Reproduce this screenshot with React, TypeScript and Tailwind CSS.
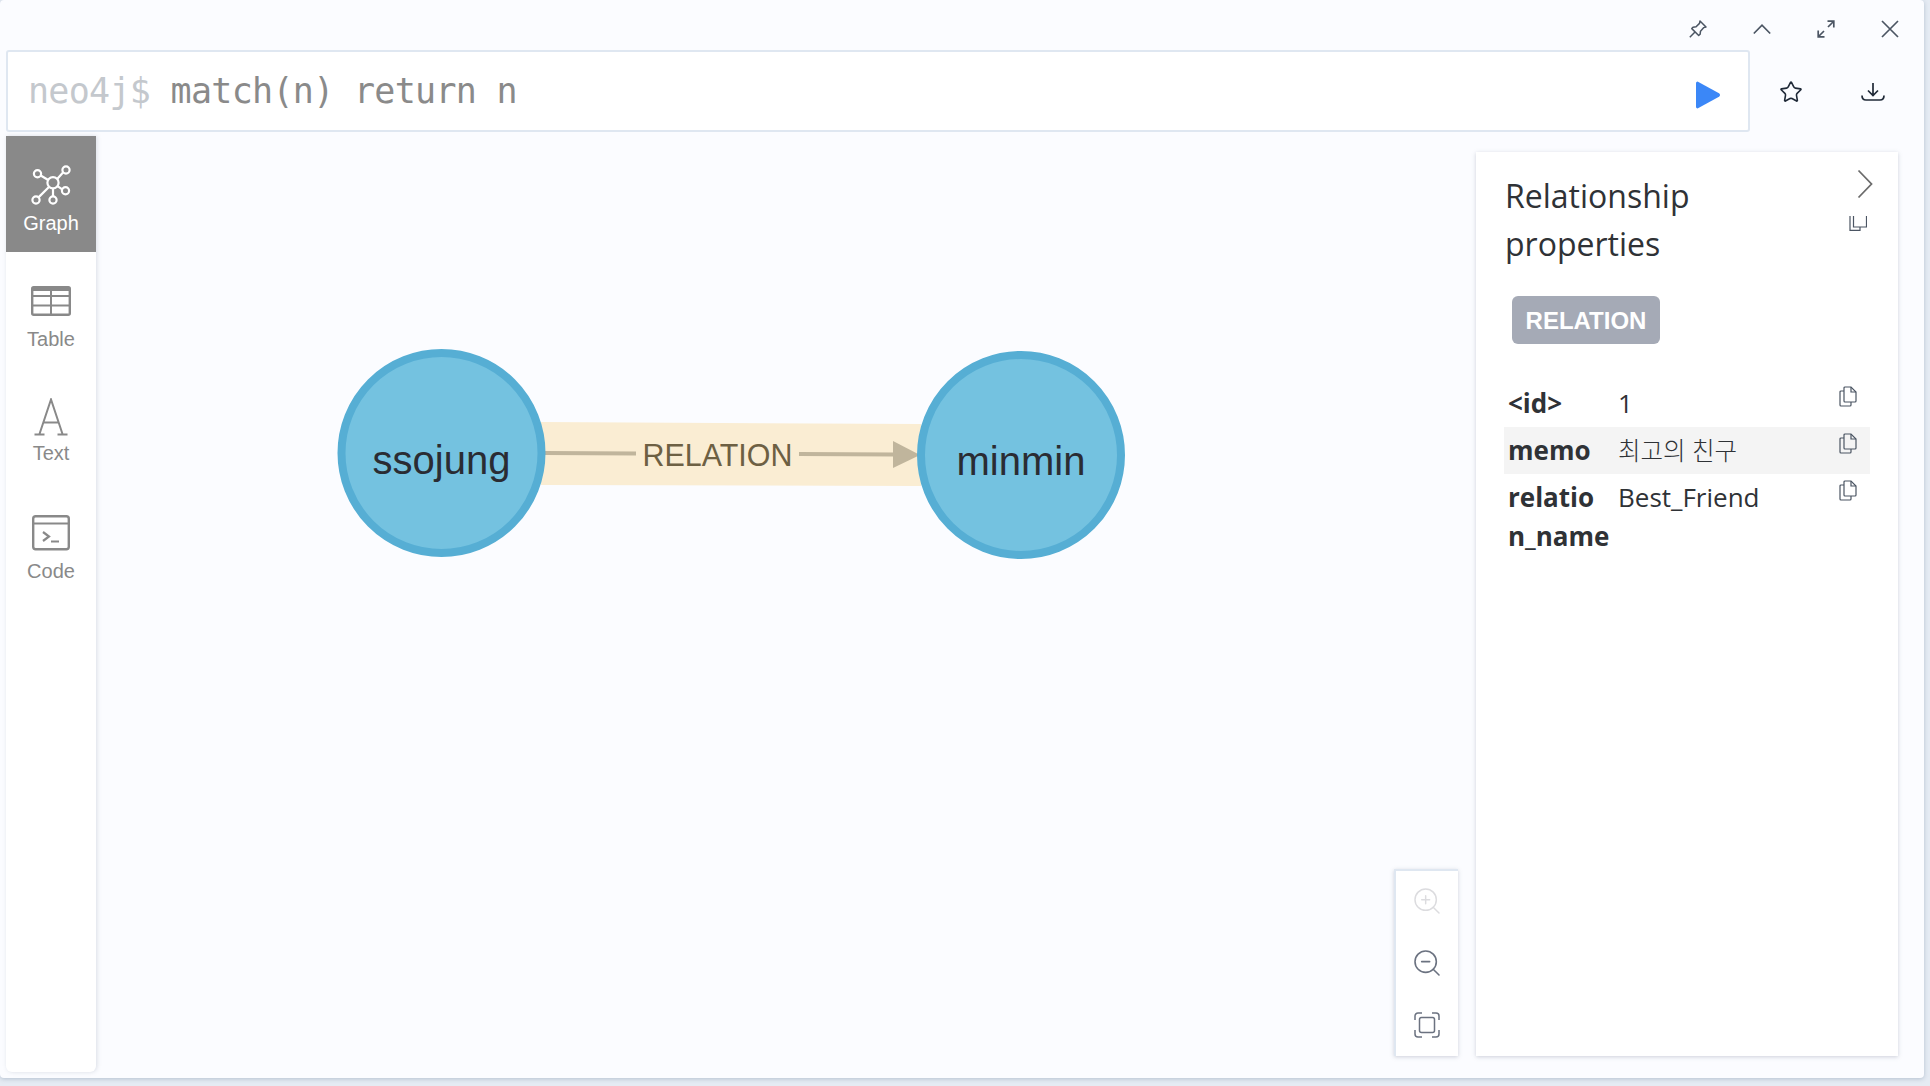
import { ZoomIn, ZoomOut, Star } from 'lucide-react';

const openSans = "font-['Open_Sans','Noto_Sans_CJK_KR',sans-serif]";
const helvetica = "font-['Liberation_Sans',sans-serif]";

function GraphIcon() {
  return (
    <svg width="40" height="40" viewBox="0 0 40 40" fill="none" stroke="currentColor" strokeWidth="2.2">
      <circle cx="22" cy="17.7" r="5.6" />
      <circle cx="6.5" cy="8.7" r="3.6" />
      <circle cx="35" cy="5" r="3.6" />
      <circle cx="34.5" cy="25.7" r="3.6" />
      <circle cx="5" cy="35" r="3.6" />
      <circle cx="22" cy="35" r="3.6" />
      <path d="M9.7 10.5 17.2 15M32 7.5l-5.8 6.4M31.2 24.3l-5-3.5M7.5 32.4l10.7-10.7M22 23.3v8.1" />
    </svg>
  );
}

function TableIcon() {
  return (
    <svg width="40" height="30" viewBox="0 0 40 30" fill="none" stroke="currentColor">
      <rect x="1.2" y="1.2" width="37.6" height="27.6" rx="1.5" strokeWidth="2.4" />
      <path d="M1 10h38M1 19.5h38M20 1v28" strokeWidth="2" />
      <path d="M1 3.5h38" strokeWidth="3" />
    </svg>
  );
}

function TextIcon() {
  return (
    <svg width="34" height="38" viewBox="0 0 34 38" fill="none" stroke="currentColor" strokeWidth="2" className="mt-[3px]">
      <path d="M5.5 36 17 1.5 28.5 36M9.5 24.5h15M0.5 36.5h10M23.5 36.5h10" />
    </svg>
  );
}

function CodeIcon() {
  return (
    <svg width="38" height="36" viewBox="0 0 38 36" fill="none" stroke="currentColor">
      <rect x="1.2" y="1.2" width="35.6" height="33" rx="2.5" strokeWidth="2.4" />
      <path d="M1 8.5h36" strokeWidth="2.2" />
      <path d="M11 17l6 4.5-6 4.5M19 26.5h8" strokeWidth="2.2" />
    </svg>
  );
}

function CopyIcon({ className }: { className?: string }) {
  return (
    <svg width="18" height="21" viewBox="0 0 18 21" fill="none" stroke="#4b5563" strokeWidth="1.2" className={className}>
      <path d="M6 1h6l5 5v9a1 1 0 0 1-1 1H6a1 1 0 0 1-1-1V2a1 1 0 0 1 1-1Z" />
      <path d="M12 1v5h5M5 5H2a1 1 0 0 0-1 1v13a1 1 0 0 0 1 1h9a1 1 0 0 0 1-1v-3" />
    </svg>
  );
}

const tabs = [
  { label: 'Graph', icon: <GraphIcon />, height: 'h-[116px]', active: true },
  { label: 'Table', icon: <TableIcon />, height: 'h-[114px]', active: false },
  { label: 'Text', icon: <TextIcon />, height: 'h-[118px]', active: false },
  { label: 'Code', icon: <CodeIcon />, height: 'h-[116px]', active: false },
];

const props = [
  { name: '<id>', value: '1', rowClass: 'h-[47px]', valueClass: '' },
  { name: 'memo', value: '최고의 친구', rowClass: 'h-[47px] bg-[#f4f4f4]', valueClass: 'text-[24.5px] font-light' },
  { name: 'relation_name', value: 'Best_Friend', rowClass: 'h-[86px]', valueClass: '' },
];

function GraphView() {
  return (
    <svg width="1380" height="936" viewBox="96 136 1380 936" className={`block ${helvetica}`}>
      {/* selected relationship */}
      <polygon points="541,422 921,424 921,486 541,485" fill="#faedd3" />
      <path d="M545 453 636 453.5M799 454 895 454.5" stroke="#c0b59c" strokeWidth="4" fill="none" />
      <polygon points="893,441 920,455 893,468" fill="#c0b59c" />
      <text x="717.5" y="466" textAnchor="middle" fontSize="32" fill="#6d6043" textLength="150" lengthAdjust="spacingAndGlyphs">
        RELATION
      </text>

      <circle cx="441.5" cy="453" r="100" fill="#74c2e0" stroke="#56aed4" strokeWidth="8" />
      <text x="441.5" y="474" textAnchor="middle" fontSize="40" fill="#2a2c33">
        ssojung
      </text>

      <circle cx="1021" cy="455" r="100" fill="#74c2e0" stroke="#56aed4" strokeWidth="8" />
      <text x="1021" y="475" textAnchor="middle" fontSize="40" fill="#2a2c33">
        minmin
      </text>
    </svg>
  );
}

export default function App() {
  return (
    <div className="w-[1930px] h-[1086px] bg-[#e5ebf3] overflow-hidden">
      <div className="w-[1924px] h-[1078px] bg-[#fbfcff] rounded-[4px] shadow-[0_1px_4px_rgba(120,140,165,0.45)] flex flex-col">
        {/* window controls */}
        <div className="h-[50px] flex items-start justify-end pr-[25px] pt-[20px] gap-[46px] text-[#4b5563]">
          <svg width="18" height="18" viewBox="0 0 18 18" fill="none" stroke="currentColor" strokeWidth="1.5" strokeLinejoin="round">
            <path d="M0.8 17.2 6 12M11 1l6 6-2.2.6-3.3 3.6-.4 3.1-1.4 1.2L2.8 8.6 4 7.2l3.1-.4 3.4-3.4L11 1Z" />
          </svg>
          <svg width="18" height="18" viewBox="0 0 18 18" fill="none" stroke="currentColor" strokeWidth="1.7">
            <path d="M0.8 13.5 9 5.2l8.2 8.3" />
          </svg>
          <svg width="18" height="18" viewBox="0 0 18 18" fill="none" stroke="currentColor" strokeWidth="1.7">
            <path d="M1 17 7 11M11 7l6-6M10.5 1.2h6.3v6.3M1.2 10.5v6.3h6.3" />
          </svg>
          <svg width="18" height="18" viewBox="0 0 18 18" fill="none" stroke="currentColor" strokeWidth="1.7">
            <path d="M1 1 17 17M17 1 1 17" />
          </svg>
        </div>

        {/* editor */}
        <div className="flex h-[86px]">
          <div className="ml-[6px] w-[1744px] h-[82px] bg-white border-2 border-[#dfe7f1] rounded-[3px] flex items-center justify-between pl-[20px] pr-[27px]">
            <div className="font-['DejaVu_Sans_Mono',monospace] text-[35px] tracking-[-0.7px] whitespace-pre">
              <span className="text-[#c4c8cd]">neo4j$ </span>
              <span className="text-[#8a8a8a]">match(n) return n</span>
            </div>
            <svg width="26" height="30" viewBox="0 0 26 30" className="mt-[8px] shrink-0">
              <path d="M2.5 1.5 24 13.2a2 2 0 0 1 0 3.5L2.5 28.5A1.6 1.6 0 0 1 1 27V3a1.6 1.6 0 0 1 1.5-1.5Z" fill="#3b87f7" />
            </svg>
          </div>
          <div className="flex-1 flex items-start text-[#1f2937]">
            <Star size={24} strokeWidth={1.6} className="ml-[29px] mt-[30px]" />
            <svg width="24" height="20" viewBox="0 0 24 20" fill="none" stroke="currentColor" strokeWidth="1.7" className="ml-[58px] mt-[32px]">
              <path d="M12 1v12M7 8.5l5 5 5-5M1 13.5c0 3 1 4.5 4 4.5h14c3 0 4-1.5 4-4.5" />
            </svg>
          </div>
        </div>

        <div className="flex h-[936px]">
          {/* sidebar */}
          <div className={`ml-[6px] w-[90px] bg-white rounded-b-[6px] shadow-[1px_0_4px_rgba(120,130,150,0.25)] shrink-0 ${helvetica}`}>
            {tabs.map((tab) => (
              <div
                key={tab.label}
                className={`${tab.height} flex flex-col items-center ${tab.active ? 'bg-[#898989] text-white' : 'text-[#898989]'}`}
              >
                <div className="h-[40px] mt-[29px] flex items-center justify-center">{tab.icon}</div>
                <div className="text-[20px] leading-[24px] mt-[6px]">{tab.label}</div>
              </div>
            ))}
          </div>

          {/* canvas */}
          <div className="relative w-[1380px] shrink-0">
            <GraphView />
            <div className="absolute right-[18px] bottom-[16px] w-[64px] h-[187px] bg-white border-2 border-[#dfe7f1] border-r-0 border-b-0 shadow-[0_1px_4px_rgba(120,130,150,0.35)] flex flex-col items-center pt-[14px] gap-[30px]">
              <ZoomIn size={32} strokeWidth={1.1} className="text-[#dcdcdf]" />
              <ZoomOut size={32} strokeWidth={1.2} className="text-[#6b7280]" />
              <svg width="26" height="26" viewBox="0 0 26 26" fill="none" stroke="#6b7280" strokeWidth="1.5" className="mt-[3px]">
                <rect x="5.5" y="5.5" width="15" height="15" rx="2" />
                <path d="M1 8V4a3 3 0 0 1 3-3h4M18 1h4a3 3 0 0 1 3 3v4M25 18v4a3 3 0 0 1-3 3h-4M8 25H4a3 3 0 0 1-3-3v-4" />
              </svg>
            </div>
          </div>

          {/* details panel */}
          <div className={`relative mt-[16px] w-[422px] h-[904px] bg-white shadow-[0_1px_4px_rgba(120,130,150,0.35)] text-[#2f3236] ${openSans}`}>
            <svg width="16" height="30" viewBox="0 0 16 30" fill="none" stroke="#6b6b6b" strokeWidth="1.8" className="absolute left-[381px] top-[17px]">
              <path d="M1.5 1.5 14.5 15 1.5 28.5" />
            </svg>
            <div className="absolute left-[373px] top-[64px] h-[15px] w-[18px] overflow-hidden">
              <svg width="18" height="20" viewBox="0 0 18 20" fill="none" stroke="#4b5563" strokeWidth="1.2" className="-mt-[5px]">
                <path d="M4.5 1h13v15h-13zM1 1v18.4h10V16" />
              </svg>
            </div>
            <h2 className="pl-[29px] pt-[20px] text-[32px] leading-[48px] font-normal w-[260px]">Relationship properties</h2>
            <div className="ml-[36px] mt-[28px] w-[148px] h-[48px] pt-[1px] rounded-[6px] bg-[#a5aab6] flex items-center justify-center text-white text-[24px] font-bold font-['Liberation_Sans',sans-serif]">
              RELATION
            </div>
            <div className="mt-[36px] mx-[28px] w-[366px]">
              {props.map((row) => (
                <div key={row.name} className={`flex ${row.rowClass} relative text-[26px] leading-[39px] pt-[4px]`}>
                  <div className="pl-[4px] pr-[7px] w-[114px] font-bold break-all">{row.name}</div>
                  <div className={row.valueClass}>{row.value}</div>
                  <CopyIcon className="absolute left-[335px] top-[6px]" />
                </div>
              ))}
            </div>
          </div>
        </div>
      </div>
    </div>
  );
}
